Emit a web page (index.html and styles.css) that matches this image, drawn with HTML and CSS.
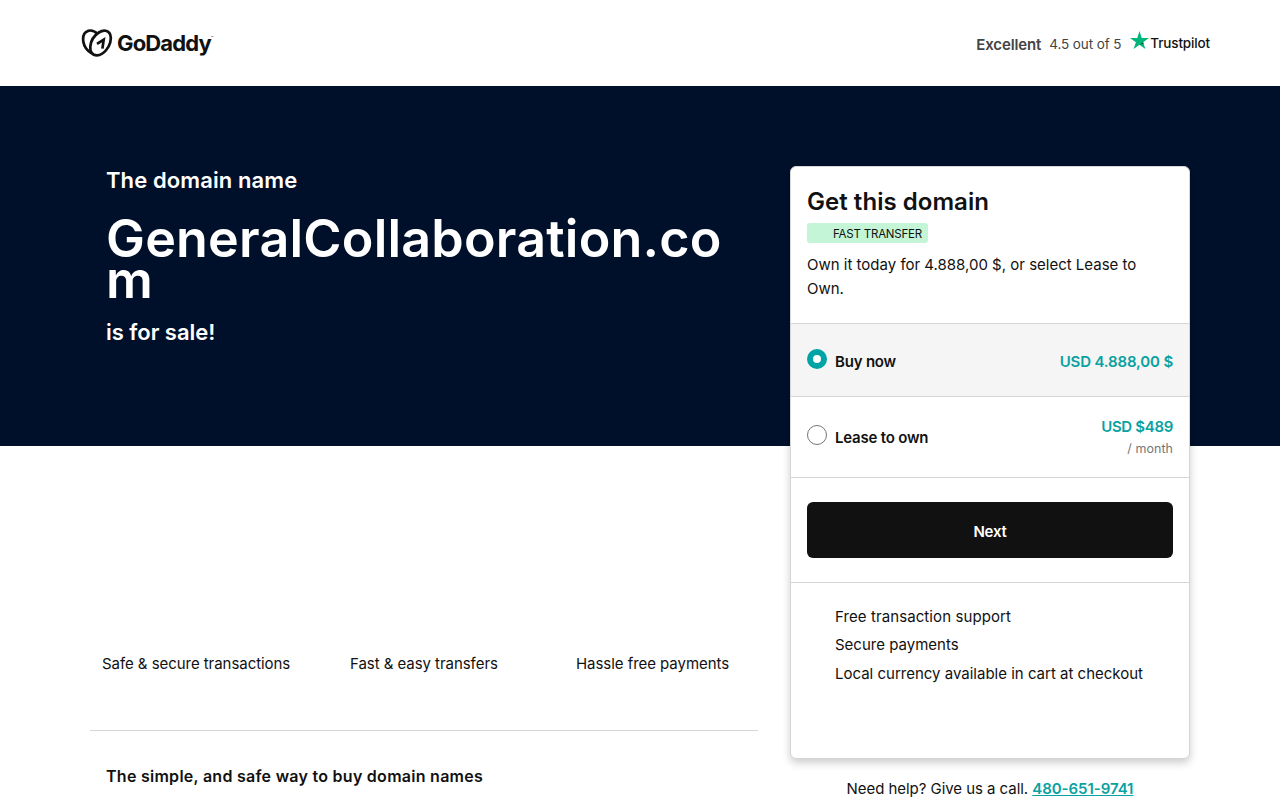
FILE: index.html
```
<!DOCTYPE html>
<html lang="en">
<head>
<meta charset="utf-8">
<title>GeneralCollaboration.com is for sale</title>
<link rel="stylesheet" href="styles.css">
</head>
<body>
<header class="header">
  <div class="logo">
    <svg class="logo-mark" viewBox="0 0 32 30" fill="none" stroke="#111" stroke-width="2.7">
      <path d="M11 25.600C6.500 23 3.200 18.800 2.400 14 1.500 8.500 3.300 4.200 7 2.900 10.200 1.900 13.600 3 16.400 5.800"/>
      <path d="M16 27.300C11 27.300 8.900 23.300 9.300 18.600 9.800 12.900 13.200 7.500 17.800 4.500 22.500 1.500 27.500 2.200 29.200 6.400 31 11.200 28.900 17.600 25.200 22 22.500 25.400 19.200 27.300 16 27.300Z"/>
      <path d="M16 15.900 22.700 11.700 21.400 20.600"/>
    </svg>
    <span class="logo-word">GoDaddy</span><span class="logo-tm">™</span>
  </div>
  <div class="rating">
    <span class="rating-word">Excellent</span>
    <span class="rating-score">4.5 out of 5</span>
    <span class="trustpilot">
      <svg class="star" viewBox="0 0 20 19"><path fill="#00b67a" d="M10 0l2.360 7.260H20l-6.180 4.490L16.180 19 10 14.520 3.820 19l2.360-7.250L0 7.260h7.640z"/><path fill="#005128" d="M14.350 13.400l-.53-1.650L10 14.520z"/></svg>
      <span class="trustpilot-word">Trustpilot</span>
    </span>
  </div>
</header>
<main class="main">
  <div class="content">
    <section class="lead">
      <div class="intro">
        <p class="intro-line">The domain name</p>
        <h1 class="domain">GeneralCollaboration.com</h1>
        <p class="intro-line intro-last">is for sale!</p>
      </div>
      <ul class="benefits">
        <li class="benefit">Safe &amp; secure transactions</li>
        <li class="benefit">Fast &amp; easy transfers</li>
        <li class="benefit">Hassle free payments</li>
      </ul>
      <h2 class="subhead">The simple, and safe way to buy domain names</h2>
    </section>
    <aside class="side">
      <div class="card">
        <div class="card-top">
          <h2 class="card-title">Get this domain</h2>
          <span class="badge">FAST TRANSFER</span>
          <p class="card-text">Own it today for 4.888,00 $, or select Lease to Own.</p>
        </div>
        <div class="option option-buy">
          <span class="radio radio-on"></span>
          <span class="option-name">Buy now</span>
          <span class="price">USD 4.888,00 $</span>
        </div>
        <div class="option option-lease">
          <span class="radio"></span>
          <span class="option-name">Lease to own</span>
          <span class="price price-lease">USD $489<small class="per">/ month</small></span>
        </div>
        <div class="action"><button class="next" type="button">Next</button></div>
        <ul class="perks">
          <li class="perk-free">Free transaction support</li>
          <li>Secure payments</li>
          <li>Local currency available in cart at checkout</li>
        </ul>
      </div>
      <p class="help">Need help? Give us a call. <a class="phone" href="tel:4806519741">480-651-9741</a></p>
    </aside>
  </div>
</main>
</body>
</html>
```
FILE: styles.css
```
* { box-sizing: border-box; margin: 0; padding: 0; }
html { overflow: hidden; }
body { height: 800px; overflow: hidden; background: #fff; color: #111; font: 400 15px/24px Inter, "Open Sans", sans-serif; }
ul { list-style: none; }

.header { height: 86px; display: flex; justify-content: space-between; padding: 0 70px 0 81px; }
.logo { display: flex; align-items: flex-start; padding-top: 28px; }
.logo-mark { width: 32px; height: 30px; }
.logo-word { margin-left: 4px; font-size: 22px; line-height: 31px; font-weight: 700; letter-spacing: -.84px; }
.logo-tm { font-size: 4px; line-height: 20px; }
.rating { display: flex; align-items: flex-start; color: #444; line-height: 24px; padding-top: 32px; }
.rating-word { font-weight: 600; letter-spacing: -.12px; line-height: 26px; margin-right: 8px; }
.rating-score { font-size: 13.5px; letter-spacing: -.11px; margin-right: 9px; }
.trustpilot { display: flex; color: #111; }
.star { width: 19px; height: 18px; margin-top: -1px; }
.trustpilot-word { font-size: 13.5px; font-weight: 500; line-height: 23px; letter-spacing: -.15px; margin-left: 1px; }

.main { background: linear-gradient(#00102b 360px, #fff 360px); padding: 80px 90px 0; }
.content { display: grid; grid-template-columns: 668px 400px; gap: 32px; }
.intro { height: 456px; padding: 0 16px; color: #fff; }
.intro-line { font-size: 22px; line-height: 28px; font-weight: 600; letter-spacing: .1px; }
.domain { margin-top: 24px; font-size: 52px; line-height: 41px; font-weight: 600; letter-spacing: .2px; word-break: break-all; }
.intro-last { margin-top: 18px; letter-spacing: -.03px; }
.benefits { display: grid; grid-template-columns: 248px 226px auto; height: 109px; padding: 30px 0 0 12px; border-bottom: 1px solid #d6d6d6; letter-spacing: -.05px; }
.subhead { padding: 33px 16px 0; font-size: 16px; line-height: 24px; font-weight: 600; letter-spacing: .27px; }

.card { height: 593px; background: #fff; border: 1px solid #d6d6d6; border-radius: 6px; box-shadow: 0 4px 8px rgba(0, 0, 0, .2); overflow: hidden; }
.card-top { height: 156px; padding: 19px 16px 0; }
.card-title { font-size: 24px; line-height: 32px; font-weight: 600; letter-spacing: .04px; }
.badge { display: block; width: 121px; height: 20px; margin-top: 5px; padding-left: 26px; background: #c4f5d6; border-radius: 3px; font-size: 11.5px; line-height: 22px; letter-spacing: -.2px; }
.card-text { margin-top: 10px; padding-right: 30px; }
.option { display: flex; align-items: center; padding: 2px 16px 0; border-top: 1px solid #d6d6d6; }
.option-buy { height: 73px; background: #f5f5f5; padding-top: 3px; }
.option-lease { height: 81px; }
.radio { width: 20px; height: 20px; margin: -6px 8px 0 0; border: 1px solid #767676; border-radius: 50%; background: #fff; }
.radio-on { border: 6px solid #00a4a6; }
.option-name { flex: 1; font-weight: 600; letter-spacing: -.2px; }
.price { color: #09a1a1; font-weight: 600; text-align: right; letter-spacing: -.15px; }
.price-lease { line-height: 22px; letter-spacing: -.32px; }
.per { display: block; color: #767676; font-size: 12.5px; font-weight: 400; letter-spacing: .05px; }
.action { height: 105px; padding: 24px 16px; border-top: 1px solid #d6d6d6; }
.next { width: 100%; height: 56px; border: 0; border-radius: 6px; background: #111; color: #fff; font: 600 15px Inter, sans-serif; letter-spacing: -.25px; padding-top: 2px; }
.perks { border-top: 1px solid #d6d6d6; padding: 20px 16px 0 44px; line-height: 28.4px; }
.perk-free { letter-spacing: .09px; }
.help { margin-top: 18px; text-align: center; letter-spacing: -.05px; }
.phone { color: #09a1a1; font-weight: 600; }
```
